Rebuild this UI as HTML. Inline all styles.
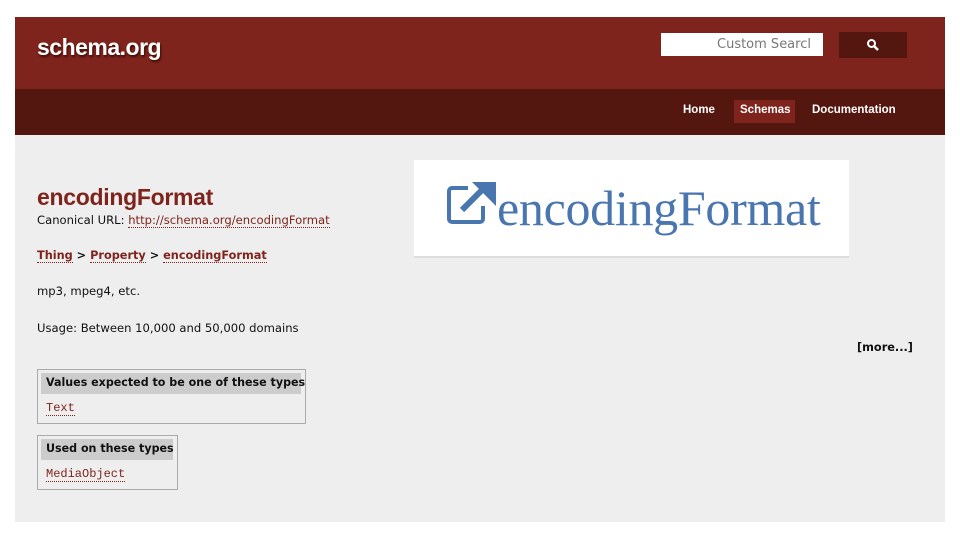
<!DOCTYPE html>
<html><head><style>
body{margin:0;width:960px;height:540px;background:#fff;font-family:"DejaVu Sans","Liberation Sans",sans-serif;position:relative;overflow:hidden}
.a{position:absolute}
.lnk{color:#7f241c;text-decoration:none;border-bottom:1px dotted #7f241c}
.t{font-size:11.6px;color:#111}
.b{font-weight:bold;font-size:11.3px}
.n{font-family:'Liberation Sans',sans-serif;font-weight:bold;font-size:11.5px;color:#fff}
</style></head><body>
<div class="a" style="left:15px;top:17px;width:930px;height:72px;background:#7f241c"></div>
<div class="a" style="left:15px;top:89px;width:930px;height:46px;background:#541710"></div>
<div class="a" style="left:15px;top:135px;width:930px;height:387px;background:#eeeeee"></div>
<div class="a" style="left:37px;top:34px;font-family:'Liberation Sans',sans-serif;font-weight:bold;font-size:23px;color:#fff;letter-spacing:-0.5px;text-shadow:1px 2px 2px #3a0d08">schema.org</div>
<div class="a" style="left:661px;top:33px;width:162px;height:23px;background:#fff"></div>
<div class="a t" style="left:717px;top:37px;font-size:13px;color:#777">Custom Searcl</div>
<div class="a" style="left:839px;top:32px;width:68px;height:26px;background:#541710"></div>
<svg class="a" style="left:866px;top:38px" width="14" height="14" viewBox="0 0 14 14"><circle cx="5.5" cy="5.5" r="3.5" stroke="#fff" stroke-width="2" fill="none"/><path d="M8 8L12 12" stroke="#fff" stroke-width="2.5"/></svg>
<div class="a" style="left:734px;top:100px;width:61px;height:23px;background:#7f241c"></div>
<div class="a n" style="left:683px;top:104px">Home</div>
<div class="a n" style="left:740px;top:104px">Schemas</div>
<div class="a n" style="left:812px;top:104px">Documentation</div>
<div class="a" style="left:414px;top:160px;width:435px;height:96px;background:#fff;border-bottom:2px solid #ddd"></div>
<svg class="a" style="left:446px;top:180px" width="52" height="46" viewBox="0 0 52 46"><path d="M22 8H6a3 3 0 0 0-3 3v28a3 3 0 0 0 3 3h28a3 3 0 0 0 3-3V26" stroke="#4a76b0" stroke-width="4" fill="none"/><path d="M16 30L36 10" stroke="#4a76b0" stroke-width="6"/><path d="M26 2H50V26Z" fill="#4a76b0"/></svg>
<div class="a" style="left:497px;top:181px;font-family:'Liberation Serif',serif;font-size:50px;color:#4a76b0;line-height:54px;letter-spacing:-0.3px">encodingFormat</div>
<div class="a" style="left:37px;top:184px;font-family:'Liberation Sans',sans-serif;font-weight:bold;font-size:23px;color:#7f241c;letter-spacing:-0.3px">encodingFormat</div>
<div class="a t" style="left:37px;top:213px">Canonical URL: <span class="lnk">http://schema.org/encodingFormat</span></div>
<div class="a t b" style="left:37px;top:249px"><span class="lnk">Thing</span> &gt; <span class="lnk">Property</span> &gt; <span class="lnk">encodingFormat</span></div>
<div class="a t" style="left:37px;top:284px">mp3, mpeg4, etc.</div>
<div class="a t" style="left:37px;top:321px">Usage: Between 10,000 and 50,000 domains</div>
<div class="a t b" style="left:857px;top:341px">[more...]</div>
<div class="a" style="left:37px;top:369px;width:267px;height:53px;border:1px solid #aaa"></div>
<div class="a" style="left:41px;top:373px;width:260px;height:21px;background:#ccc"></div>
<div class="a t b" style="left:46px;top:376px;font-size:11.1px">Values expected to be one of these types</div>
<div class="a" style="left:46px;top:401px;font-family:'Liberation Mono',monospace;font-size:12px"><span class="lnk">Text</span></div>
<div class="a" style="left:37px;top:435px;width:139px;height:53px;border:1px solid #aaa"></div>
<div class="a" style="left:41px;top:439px;width:132px;height:21px;background:#ccc"></div>
<div class="a t b" style="left:46px;top:442px;font-size:11.1px">Used on these types</div>
<div class="a" style="left:46px;top:467px;font-family:'Liberation Mono',monospace;font-size:12px"><span class="lnk">MediaObject</span></div>
</body></html>
